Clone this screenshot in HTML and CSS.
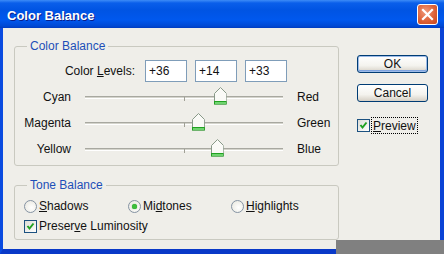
FILE: index.html
```html
<!DOCTYPE html>
<html lang="en">
<head>
  <meta charset="UTF-8" />
  <title>Color Balance</title>
  <link rel="stylesheet" href="styles.css">
</head>
<body>
  <div class="window">
    <div class="titlebar">
      <span class="title">Color Balance</span>
      <span class="close">
        <svg width="13" height="13" viewBox="0 0 13 13">
          <path d="M2 2 L11 11 M11 2 L2 11" stroke="#fff" stroke-width="2.2" stroke-linecap="square" />
        </svg>
      </span>
    </div>

    <div class="frame">
      <div class="left">
        <fieldset class="group">
          <legend>Color Balance</legend>
          <div class="levels">
            <label>Color <u>L</u>evels:</label>
            <input class="level" type="text" value="+36" />
            <input class="level" type="text" value="+14" />
            <input class="level" type="text" value="+33" />
          </div>

          <div class="slider-row">
            <span class="lbl">Cyan</span>
            <div class="track"><span class="tick"></span>
              <span class="thumb" style="left:68%"></span>
            </div>
            <span class="rlbl">Red</span>
          </div>
          <div class="slider-row">
            <span class="lbl">Magenta</span>
            <div class="track"><span class="tick"></span>
              <span class="thumb" style="left:57%"></span>
            </div>
            <span class="rlbl">Green</span>
          </div>
          <div class="slider-row">
            <span class="lbl">Yellow</span>
            <div class="track"><span class="tick"></span>
              <span class="thumb" style="left:66.5%"></span>
            </div>
            <span class="rlbl">Blue</span>
          </div>
        </fieldset>

        <fieldset class="group tone">
          <legend>Tone Balance</legend>
          <div class="radios">
            <span class="opt shadows"><span class="radio"></span><u>S</u>hadows</span>
            <span class="opt midtones"><span class="radio on"></span>Mi<u>d</u>tones</span>
            <span class="opt"><span class="radio"></span><u>H</u>ighlights</span>
          </div>
          <div class="opt">
            <span class="check"></span>Preser<u>v</u>e Luminosity
          </div>
        </fieldset>
      </div>

      <div class="right">
        <button class="btn default">OK</button>
        <button class="btn">Cancel</button>
        <div class="opt preview">
          <span class="check"></span><span class="focus"><u>P</u>review</span>
        </div>
      </div>
    </div>

    <div class="offscreen"></div>
  </div>
</body>
</html>
```

FILE: styles.css
```css
body {
  margin: 0;
  background: #808080;
  font-family: "Liberation Sans", Arial, sans-serif;
  font-size: 12px;
  color: #111;
}
.window {
  position: relative;
  width: 444px;
  height: 254px;
  display: flex;
  flex-direction: column;
  overflow: hidden;
}

/* title bar */
.titlebar {
  height: 28px;
  flex: none;
  display: flex;
  align-items: center;
  justify-content: space-between;
  background: linear-gradient(#3d8cf7 0, #0a5fea 3px, #0054e3 10px, #0058ee 20px, #0049d4 26px, #003cc0 28px);
}
.title {
  margin-left: 7px;
  margin-top: 2px;
  color: #fff;
  font-weight: bold;
  font-size: 13px;
  text-shadow: 1px 1px #0a1e8a;
}
.close {
  width: 19px;
  height: 19px;
  margin-right: 6px;
  border: 1px solid #fff;
  border-radius: 3px;
  background: radial-gradient(circle at 40% 35%, #f09a7c 0, #de6238 55%, #c8461c 100%);
  display: flex;
  align-items: center;
  justify-content: center;
}

/* window frame */
.frame {
  flex: 1;
  display: flex;
  background: #efeee9;
  border-left: 3px solid #0a4be0;
  border-right: 4px solid #0a43d6;
  border-bottom: 5px solid #0939c8;
  padding: 11px 0 0 11px;
}
.left {
  width: 325px;
}
.right {
  margin-left: 18px;
  padding-top: 16px;
  display: flex;
  flex-direction: column;
}

/* group boxes */
.group {
  margin: 0;
  padding: 7px 0 3px 0;
  border: 1px solid #c9c9c0;
  border-radius: 3px;
}
.group legend {
  margin-left: 12px;
  padding: 0 3px;
  line-height: 14px;
  color: #1d4fb8;
}
.tone {
  margin-top: 12px;
  padding-top: 4px;
}

/* color levels */
.levels {
  display: flex;
  align-items: center;
  gap: 8px;
  height: 22px;
  margin-bottom: 2px;
}
.levels label {
  width: 120px;
  text-align: right;
  margin-right: 2px;
}
.level {
  box-sizing: border-box;
  width: 42px;
  height: 22px;
  margin: 0;
  padding: 0 3px;
  border: 1px solid #7f9db9;
  background: #fff;
  color: #111;
  font-family: inherit;
  font-size: 12px;
}

/* sliders */
.slider-row {
  display: grid;
  grid-template-columns: 56px 198px auto;
  column-gap: 14px;
  align-items: center;
  height: 26px;
}
.lbl {
  text-align: right;
}
.track {
  position: relative;
  height: 1px;
  background: #d4d4cc;
  border-top: 1px solid #a8a8a0;
  border-bottom: 1px solid #fff;
}
.tick {
  position: absolute;
  left: 99px;
  top: 0;
  width: 1px;
  height: 4px;
  background: #a0a096;
}
.thumb {
  position: absolute;
  top: -10px;
  width: 13px;
  height: 18px;
  margin-left: -6px;
  background:
    linear-gradient(#21a121, #21a121) bottom / 100% 4px no-repeat,
    url("data:image/svg+xml,%3Csvg xmlns='http://www.w3.org/2000/svg' width='13' height='18'%3E%3Cpath d='M0.5 6.5 L6.5 0.5 L12.5 6.5 V17.5 H0.5 Z' fill='%23fafaf7' stroke='%23889988'/%3E%3C/svg%3E");
  clip-path: polygon(0 6px, 6.5px 0, 13px 6px, 13px 18px, 0 18px);
}
.thumb::after {
  content: "";
  position: absolute;
  left: 1px;
  right: 1px;
  bottom: 1px;
  height: 2px;
  background: #6fd36f;
}

/* radios and checks */
.radios {
  display: flex;
  height: 20px;
  align-items: center;
}
.opt {
  display: flex;
  align-items: center;
  height: 20px;
  padding-left: 9px;
}
.shadows {
  width: 95px;
}
.midtones {
  width: 94px;
}
.radio {
  box-sizing: border-box;
  width: 13px;
  height: 13px;
  margin-right: 2px;
  border-radius: 50%;
  border: 1px solid #8593a3;
  background: radial-gradient(circle at 60% 60%, #fff 0, #e6e5dc 100%);
  display: flex;
  align-items: center;
  justify-content: center;
}
.radio.on::after {
  content: "";
  width: 5px;
  height: 5px;
  border-radius: 50%;
  background: #3cbe3c;
  box-shadow: 0 0 1px #1a8d1a;
}
.check {
  box-sizing: border-box;
  width: 13px;
  height: 13px;
  margin-right: 2px;
  border: 1px solid #1c5180;
  background:
    url("data:image/svg+xml,%3Csvg xmlns='http://www.w3.org/2000/svg' width='11' height='11'%3E%3Cpath d='M2.5 5 L4.5 7.5 L8.5 2.5' fill='none' stroke='%2321a121' stroke-width='2'/%3E%3C/svg%3E") center no-repeat,
    linear-gradient(135deg, #dcdcd6, #fff);
}

/* buttons */
.btn {
  width: 71px;
  height: 18px;
  margin: 0 0 11px 0;
  padding: 0;
  border: 1px solid #003c74;
  border-radius: 3px;
  background: linear-gradient(#ffffff, #f4f3ee 60%, #d6d0c5);
  color: #111;
  font-family: inherit;
  font-size: 12px;
  line-height: 16px;
}
.btn.default {
  box-shadow: inset 0 0 0 1px #9dbbe8, inset 0 -1px 0 1px #7ea3df;
}
.preview {
  padding-left: 0;
  margin-top: 2px;
}
.focus {
  outline: 1px dotted #000;
  outline-offset: 0;
  padding: 1px 1px 0 1px;
}

/* desktop area showing beyond the screen edge */
.offscreen {
  position: absolute;
  left: 336px;
  top: 240px;
  right: 0;
  bottom: 0;
  background: #808080;
}
```
